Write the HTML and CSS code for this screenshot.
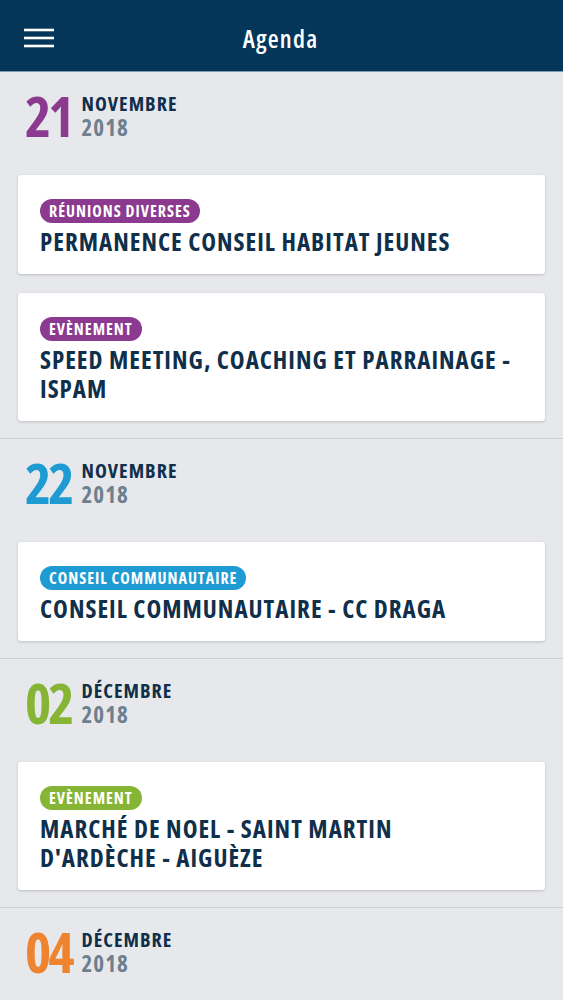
FILE: index.html
```html
<!DOCTYPE html>
<html lang="fr">
<head>
<meta charset="utf-8">
<title>Agenda</title>
<link rel="stylesheet" href="styles.css">
</head>
<body>
<header class="topbar">
  <button class="menu" aria-label="Menu">
    <svg width="30" height="20" viewBox="0 0 30 20"><g stroke="#fff" stroke-width="2.6"><line x1="0" y1="2" x2="30" y2="2"/><line x1="0" y1="10" x2="30" y2="10"/><line x1="0" y1="18" x2="30" y2="18"/></g></svg>
  </button>
  <h1 class="title">Agenda</h1>
</header>
<main class="list">
  <section class="day">
    <div class="date">
      <span class="num purple">21</span>
      <span class="my"><span class="month">NOVEMBRE</span><span class="year">2018</span></span>
    </div>
    <article class="card">
      <span class="tag bg-purple">RÉUNIONS DIVERSES</span>
      <h2 class="event">PERMANENCE CONSEIL HABITAT JEUNES</h2>
    </article>
    <article class="card">
      <span class="tag bg-purple">EVÈNEMENT</span>
      <h2 class="event">SPEED MEETING, COACHING ET PARRAINAGE - ISPAM</h2>
    </article>
  </section>
  <section class="day">
    <div class="date">
      <span class="num blue">22</span>
      <span class="my"><span class="month">NOVEMBRE</span><span class="year">2018</span></span>
    </div>
    <article class="card">
      <span class="tag bg-blue">CONSEIL COMMUNAUTAIRE</span>
      <h2 class="event">CONSEIL COMMUNAUTAIRE - CC DRAGA</h2>
    </article>
  </section>
  <section class="day">
    <div class="date">
      <span class="num green">02</span>
      <span class="my"><span class="month">DÉCEMBRE</span><span class="year">2018</span></span>
    </div>
    <article class="card">
      <span class="tag bg-green">EVÈNEMENT</span>
      <h2 class="event">MARCHÉ DE NOEL - SAINT MARTIN D'ARDÈCHE - AIGUÈZE</h2>
    </article>
  </section>
  <section class="day">
    <div class="date">
      <span class="num orange">04</span>
      <span class="my"><span class="month">DÉCEMBRE</span><span class="year">2018</span></span>
    </div>
  </section>
</main>
</body>
</html>
```
FILE: styles.css
```css
html, body {
  margin: 0;
  padding: 0;
}
body {
  background: #e6e8ec;
  font-family: "Open Sans", "Liberation Sans Narrow", sans-serif;
  font-stretch: 75%;
  color: #0f2f4b;
  width: 563px;
  overflow: hidden;
}
.topbar {
  height: 72px;
  background: #033658;
  border-bottom: 1px solid #7d9bb2;
  box-sizing: border-box;
  display: flex;
  align-items: center;
  justify-content: center;
  position: relative;
}
.menu {
  position: absolute;
  left: 24px;
  top: 28px;
  padding: 0;
  border: 0;
  background: none;
  width: 30px;
  height: 20px;
  display: block;
}
.menu svg { display: block; }
.title {
  margin: 0;
  color: #fff;
  font-family: "Open Sans", sans-serif;
  font-weight: 600;
  font-size: 25px;
  font-stretch: 75%;
  letter-spacing: 1.2px;
  line-height: 30px;
  padding-top: 5px;
  padding-right: 2px;
}
.list { display: block; }
.day {
  padding: 22px 18px 17px 18px;
  border-bottom: 1px solid #cdd1d6;
  display: flex;
  flex-direction: column;
  gap: 19px;
}
.date {
  display: flex;
  align-items: flex-start;
  padding-left: 7px;
  height: 62px;
}
.num {
  font-size: 56px;
  font-weight: 700;
  line-height: 46px;
  height: 46px;
  letter-spacing: -3px;
  margin-top: -2px;
}
.my {
  display: flex;
  flex-direction: column;
  margin-left: 10px;
  font-weight: 700;
  letter-spacing: 1px;
  margin-top: -1px;
}
.month {
  color: #0f2f4b;
  font-size: 20px;
  line-height: 22px;
}
.year {
  color: #6e7f8e;
  font-size: 23px;
  line-height: 24px;
}
.purple { color: #8b3a8f; }
.blue { color: #1f9bd3; }
.green { color: #86b536; }
.orange { color: #ee8430; }
.card {
  background: #fff;
  border-radius: 3px;
  box-shadow: 0 1px 3px rgba(0,0,0,0.18);
  padding: 24px 31px 18px 22px;
  display: flex;
  flex-direction: column;
  align-items: flex-start;
}
.tag {
  display: inline-block;
  color: #fff;
  font-weight: 700;
  font-size: 16px;
  letter-spacing: 1px;
  line-height: 24px;
  height: 24px;
  padding: 0 9px;
  border-radius: 12px;
}
.bg-purple { background: #8b3a8f; }
.bg-blue { background: #1f9bd3; }
.bg-green { background: #86b536; }
.event {
  margin: 4px 0 0 0;
  font-size: 25px;
  font-weight: 700;
  letter-spacing: 1px;
  line-height: 29px;
  color: #0f2f4b;
}
```
